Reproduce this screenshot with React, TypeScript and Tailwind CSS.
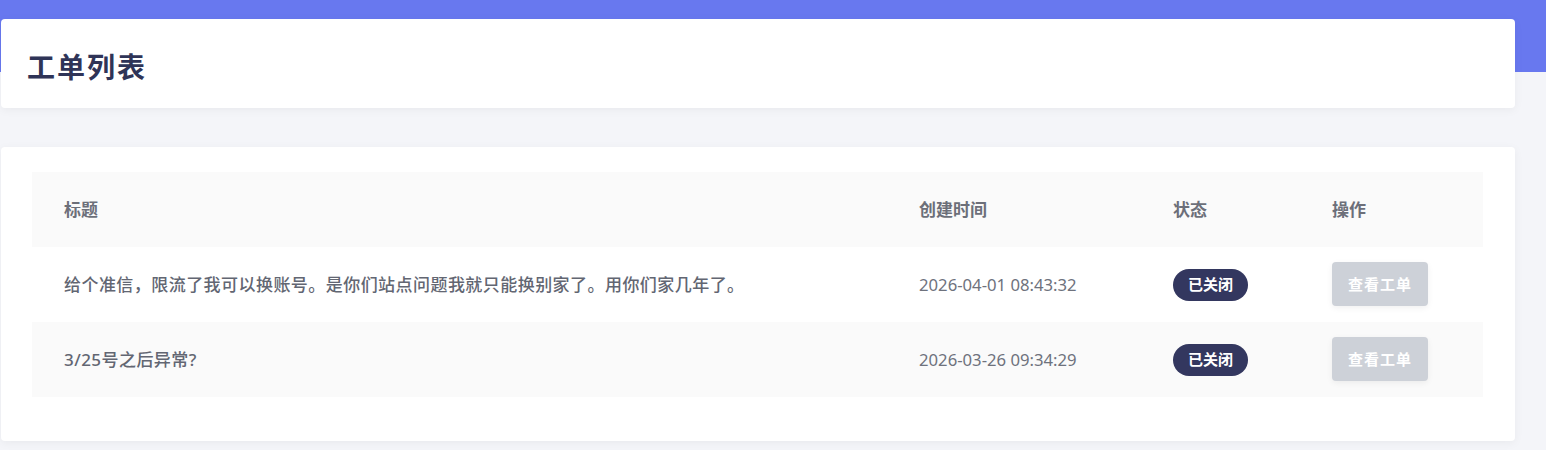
import React from "react";

const rows = [
  { title: "给个准信，限流了我可以换账号。是你们站点问题我就只能换别家了。用你们家几年了。", time: "2026-04-01 08:43:32" },
  { title: "3/25号之后异常?", time: "2026-03-26 09:34:29" },
];

export default function App() {
  return (
    <div
      className="min-h-screen bg-[#f4f5f9]"
      style={{ fontFamily: '"Noto Sans", "Noto Sans CJK SC", sans-serif' }}
    >
      <div className="h-[72px] bg-[#6878ef]" />
      <div className="-mt-[53px] ml-[1px] w-[1514px]">
        <div className="h-[89px] rounded-[4px] bg-white shadow-[0_2px_10px_rgba(0,0,0,0.05)] flex items-center pl-[26px] pt-[6px]">
          <h1 className="text-[28px] font-bold text-[#2f3457] tracking-[2px]">工单列表</h1>
        </div>
        <div className="mt-[39px] rounded-[4px] bg-white shadow-[0_2px_10px_rgba(0,0,0,0.05)] pt-[25px] pl-[31px] pr-[32px] pb-[44px]">
          <div className="grid grid-cols-[855px_254px_159px_183px] text-[17px]">
            <div className="contents">
              <div className="h-[75px] bg-[#fafafa] flex items-center px-[32px] font-bold text-[#6c6f79]">标题</div>
              <div className="h-[75px] bg-[#fafafa] flex items-center px-[32px] font-bold text-[#6c6f79]">创建时间</div>
              <div className="h-[75px] bg-[#fafafa] flex items-center px-[32px] font-bold text-[#6c6f79]">状态</div>
              <div className="h-[75px] bg-[#fafafa] flex items-center px-[32px] font-bold text-[#6c6f79]">操作</div>
            </div>
            {rows.map((r, i) => {
              const bg = i % 2 === 1 ? "bg-[#fafafa]" : "bg-white";
              return (
                <div className="contents" key={i}>
                  <div className={`h-[75px] ${bg} flex items-center px-[32px] font-medium text-[#626672] tracking-[0.45px]`}>{r.title}</div>
                  <div className={`h-[75px] ${bg} flex items-center px-[32px] text-[16.7px] text-[#6e727d]`}>{r.time}</div>
                  <div className={`h-[75px] ${bg} flex items-center px-[32px]`}>
                    <span className="h-[32px] px-[15px] rounded-full bg-[#33375f] text-white text-[15px] font-bold flex items-center">已关闭</span>
                  </div>
                  <div className={`h-[75px] ${bg} flex items-center px-[32px]`}>
                    <button className="h-[44px] w-[96px] -mt-[1px] rounded-[4px] bg-[#cdd1d8] text-white text-[15px] font-bold tracking-[1px] shadow-[0_2px_6px_rgba(0,0,0,0.06)] flex items-center justify-center">查看工单</button>
                  </div>
                </div>
              );
            })}
          </div>
        </div>
      </div>
    </div>
  );
}
